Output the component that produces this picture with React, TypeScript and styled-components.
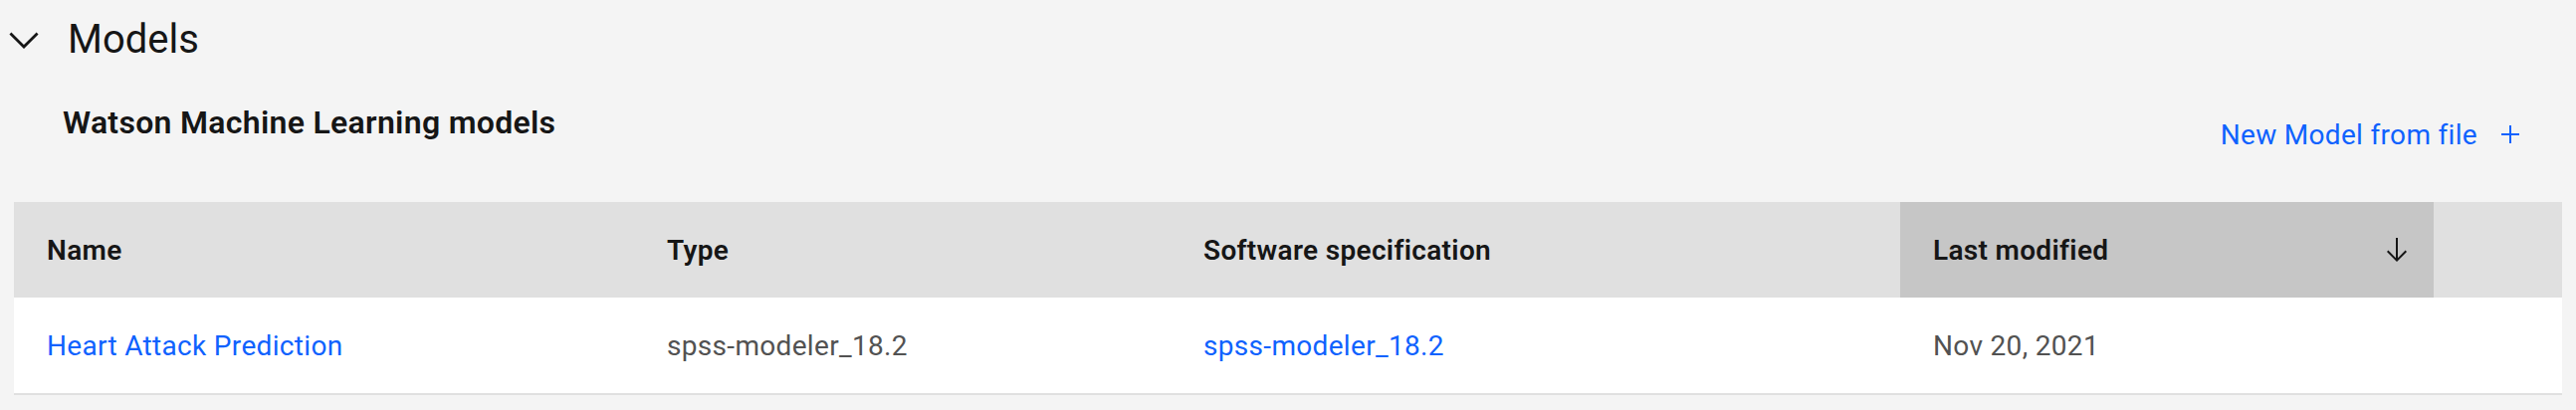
import React from 'react'
import styled, {createGlobalStyle} from 'styled-components'

const GlobalStyle = createGlobalStyle`
  * { box-sizing: border-box; }
  html, body {
    margin: 0;
    padding: 0;
    background-color: #f4f4f4;
    font-family: Roboto, "Liberation Sans", Arial, sans-serif;
    color: #161616;
  }
`

const Page = styled.main`
  width: 2588px;
  padding: 16px 14px 0;
`

const SectionHeader = styled.header`
  display: flex;
  align-items: center;
  height: 48px;
  margin-left: -14px;

  > button {
    width: 48px;
    height: 48px;
    padding: 0;
    border: 0;
    background: transparent;
    display: flex;
    align-items: center;
    justify-content: center;
    color: #161616;
    margin-right: 20px;
  }

  > h2 {
    margin: 0;
    font-size: 40px;
    line-height: 48px;
    font-weight: 400;
  }
`

const Toolbar = styled.div`
  display: flex;
  align-items: flex-start;
  justify-content: space-between;
  padding-top: 39px;
  margin-bottom: 36px;

  > h3 {
    margin: 0 0 0 49px;
    font-size: 32px;
    line-height: 40px;
    font-weight: 600;
    letter-spacing: 0.3px;
  }
`

const GhostButton = styled.button`
  display: flex;
  align-items: center;
  height: 64px;
  padding: 0 36px 0 32px;
  border: 0;
  background: transparent;
  color: #0f62fe;
  font-family: inherit;
  font-size: 28px;
  letter-spacing: 0.32px;

  > svg { margin-left: 17px; }
`

const Table = styled.div`
  display: grid;
  grid-template-columns: 623px 539px 733px 536px 1fr;
  width: 100%;
`

const HeaderCell = styled.div<{ $sorted?: boolean }>`
  display: flex;
  align-items: center;
  justify-content: space-between;
  height: 96px;
  padding: 0 21px 0 33px;
  background-color: ${p => (p.$sorted ? '#c6c6c6' : '#e0e0e0')};
  font-size: 28px;
  font-weight: 600;
  letter-spacing: 0.32px;
  color: #161616;
`

const BodyCell = styled.div<{ $link?: boolean }>`
  display: flex;
  align-items: center;
  height: 98px;
  padding: 0 33px;
  background-color: #fff;
  border-bottom: 2px solid #e0e0e0;
  font-size: 28px;
  letter-spacing: 0.32px;
  color: ${p => (p.$link ? '#0f62fe' : '#525252')};
`

const ChevronDown = () => (
  <svg width="48" height="48" viewBox="0 0 32 32" fill="currentColor">
    <path d="M16 22L6.3 12.3l1.3-1.3 8.4 8.4 8.4-8.4 1.3 1.3z" />
  </svg>
)

const AddIcon = () => (
  <svg width="32" height="32" viewBox="0 0 32 32" fill="currentColor">
    <path d="M17 15V7h-2v8H7v2h8v8h2v-8h8v-2z" />
  </svg>
)

const ArrowDown = () => (
  <svg width="32" height="32" viewBox="0 0 32 32" fill="currentColor">
    <path d="M24.59 16.59L17 24.17V4h-2v20.17l-7.59-7.58L6 18l10 10 10-10-1.41-1.41z" />
  </svg>
)

export default function App() {
  return (
    <>
      <GlobalStyle />
      <Page>
        <SectionHeader>
          <button aria-label="Collapse"><ChevronDown /></button>
          <h2>Models</h2>
        </SectionHeader>
        <Toolbar>
          <h3>Watson Machine Learning models</h3>
          <GhostButton>
            New Model from file
            <AddIcon />
          </GhostButton>
        </Toolbar>
        <Table>
          <HeaderCell>Name</HeaderCell>
          <HeaderCell>Type</HeaderCell>
          <HeaderCell>Software specification</HeaderCell>
          <HeaderCell $sorted>
            Last modified
            <ArrowDown />
          </HeaderCell>
          <HeaderCell />

          <BodyCell $link>Heart Attack Prediction</BodyCell>
          <BodyCell>spss-modeler_18.2</BodyCell>
          <BodyCell $link>spss-modeler_18.2</BodyCell>
          <BodyCell>Nov 20, 2021</BodyCell>
          <BodyCell />
        </Table>
      </Page>
    </>
  )
}
